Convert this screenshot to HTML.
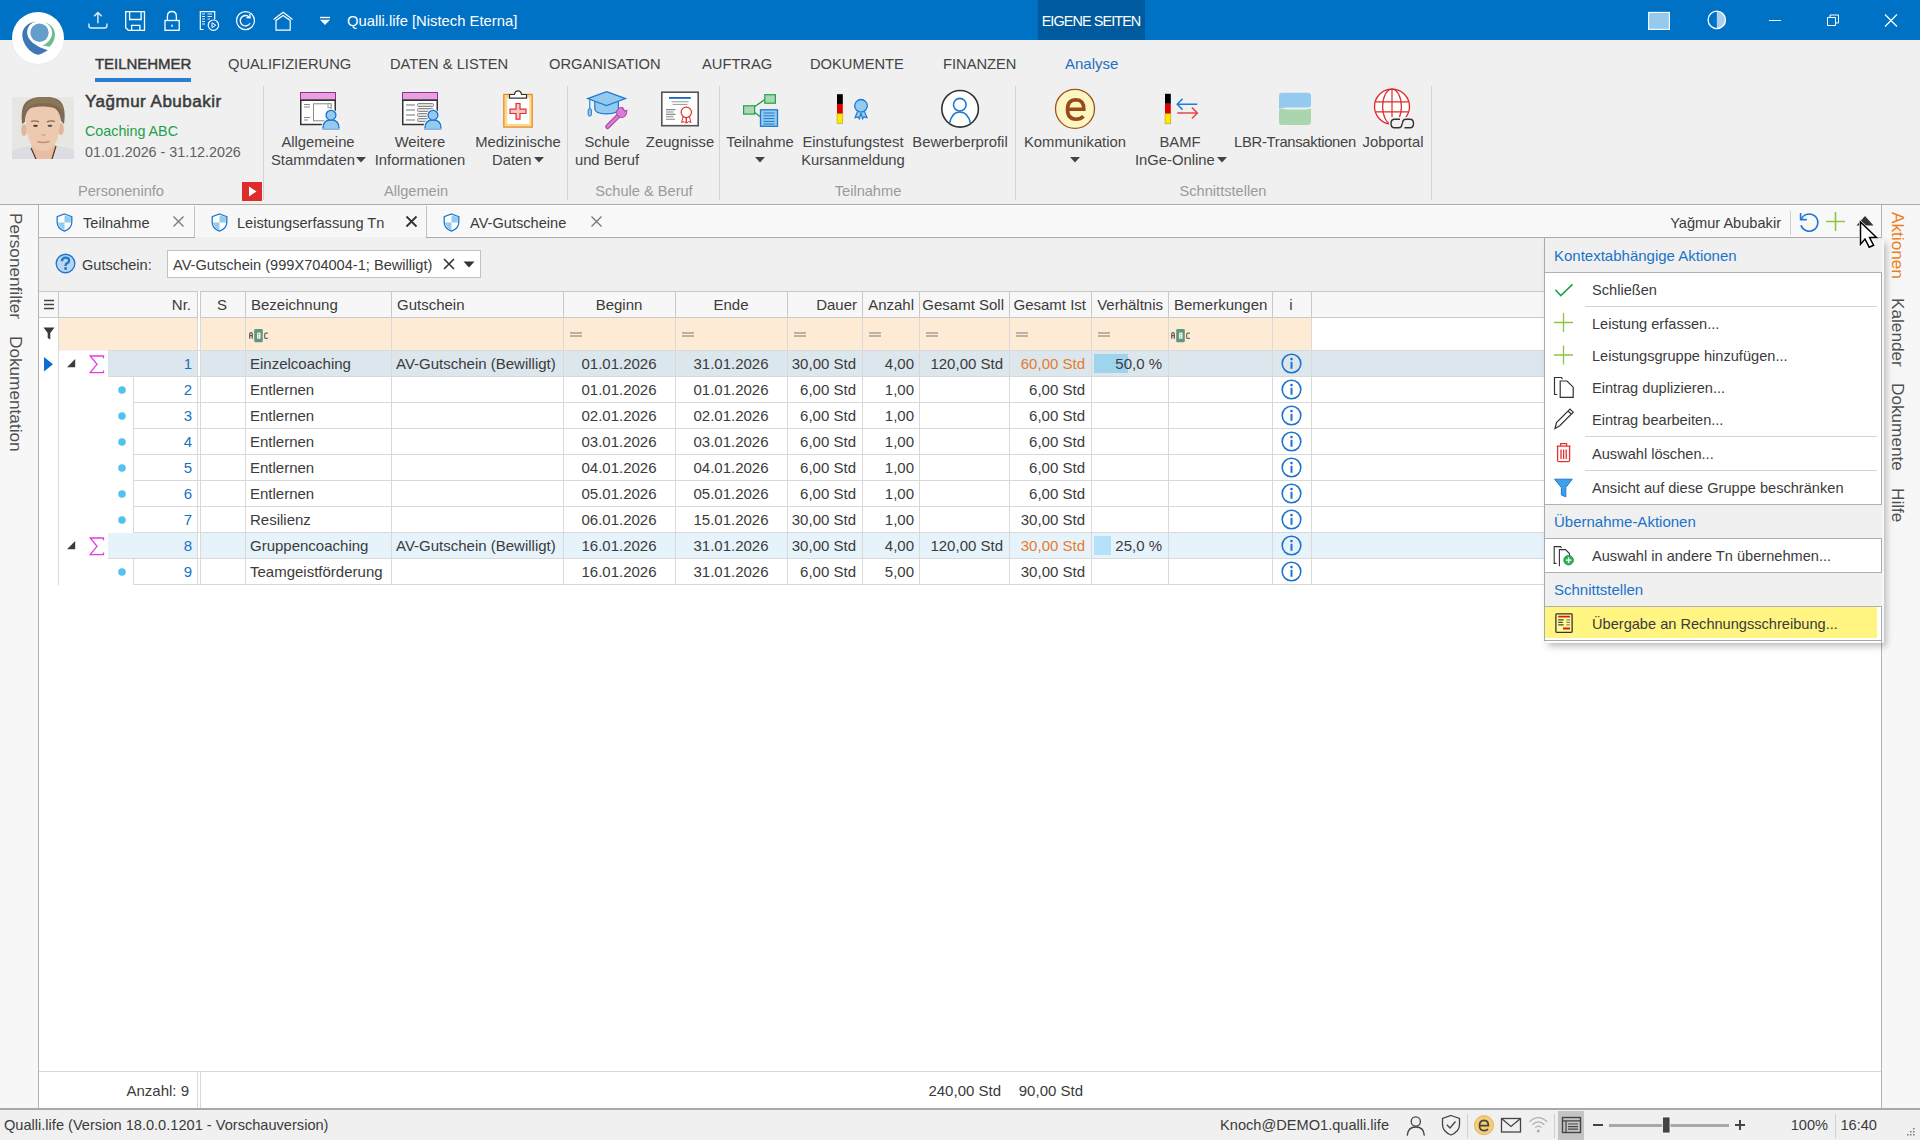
<!DOCTYPE html><html><head><meta charset="utf-8"><title>Qualli.life</title><style>
html,body{margin:0;padding:0;}
body{width:1920px;height:1140px;position:relative;overflow:hidden;background:#fff;font-family:"Liberation Sans", sans-serif;}
.t{position:absolute;white-space:nowrap;line-height:20px;-webkit-font-smoothing:antialiased;}
body{-webkit-font-smoothing:antialiased;}
.r{position:absolute;display:block;}
</style></head><body><div class="r" style="left:0px;top:0px;width:1920px;height:40px;background:#0072c6;"></div>
<div class="r" style="left:1038px;top:0px;width:107px;height:40px;background:#005a9e;"></div>
<div class="r" style="left:0px;top:40px;width:1920px;height:164px;background:#f0f0f0;"></div>
<div class="r" style="left:0px;top:204px;width:1920px;height:1px;background:#aaaaaa;"></div>
<div class="r" style="left:0px;top:205px;width:38px;height:903px;background:#f7f7f7;"></div>
<div class="r" style="left:38px;top:205px;width:1px;height:903px;background:#b4b4b4;"></div>
<div class="r" style="left:1882px;top:205px;width:38px;height:903px;background:#f7f7f7;"></div>
<div class="r" style="left:1881px;top:205px;width:1px;height:903px;background:#b4b4b4;"></div>
<div class="r" style="left:39px;top:205px;width:1842px;height:32px;background:#f8f8f8;"></div>
<div class="r" style="left:39px;top:205px;width:1842px;height:1px;background:#ffffff;"></div>
<div class="r" style="left:39px;top:236px;width:1842px;height:1px;background:#fdfdfd;"></div>
<div class="r" style="left:39px;top:237px;width:1842px;height:1px;background:#aaaaaa;"></div>
<div class="r" style="left:39px;top:238px;width:1842px;height:53px;background:#f0f0f0;"></div>
<div class="r" style="left:39px;top:291px;width:1842px;height:817px;background:#ffffff;"></div>
<div class="r" style="left:0px;top:1108px;width:1920px;height:2px;background:#a9a9a9;"></div>
<div class="r" style="left:0px;top:1110px;width:1920px;height:30px;background:#f0f0f0;"></div>
<div class="r" style="left:39px;top:291px;width:1842px;height:26px;background:#f7f7f7;"></div>
<div class="r" style="left:39px;top:291px;width:1842px;height:1px;background:#c9c9c9;"></div>
<div class="r" style="left:39px;top:317px;width:1842px;height:1px;background:#c9c9c9;"></div>
<div class="r" style="left:59px;top:318px;width:1252px;height:32px;background:#feebd6;"></div>
<div class="r" style="left:58px;top:291px;width:1px;height:26px;background:#c9c9c9;"></div>
<div class="r" style="left:197px;top:291px;width:1px;height:26px;background:#c9c9c9;"></div>
<div class="r" style="left:245px;top:291px;width:1px;height:26px;background:#c9c9c9;"></div>
<div class="r" style="left:391px;top:291px;width:1px;height:26px;background:#c9c9c9;"></div>
<div class="r" style="left:563px;top:291px;width:1px;height:26px;background:#c9c9c9;"></div>
<div class="r" style="left:675px;top:291px;width:1px;height:26px;background:#c9c9c9;"></div>
<div class="r" style="left:787px;top:291px;width:1px;height:26px;background:#c9c9c9;"></div>
<div class="r" style="left:862px;top:291px;width:1px;height:26px;background:#c9c9c9;"></div>
<div class="r" style="left:919px;top:291px;width:1px;height:26px;background:#c9c9c9;"></div>
<div class="r" style="left:1009px;top:291px;width:1px;height:26px;background:#c9c9c9;"></div>
<div class="r" style="left:1091px;top:291px;width:1px;height:26px;background:#c9c9c9;"></div>
<div class="r" style="left:1168px;top:291px;width:1px;height:26px;background:#c9c9c9;"></div>
<div class="r" style="left:1272px;top:291px;width:1px;height:26px;background:#c9c9c9;"></div>
<div class="r" style="left:1311px;top:291px;width:1px;height:26px;background:#c9c9c9;"></div>
<div class="r" style="left:200px;top:291px;width:1px;height:26px;background:#c9c9c9;"></div>
<div class="r" style="left:198px;top:291px;width:2px;height:294px;background:#ffffff;"></div>
<div class="r" style="left:58px;top:318px;width:1px;height:267px;background:#d9d9d9;"></div>
<div class="r" style="left:197px;top:318px;width:1px;height:267px;background:#d9d9d9;"></div>
<div class="r" style="left:245px;top:318px;width:1px;height:267px;background:#d9d9d9;"></div>
<div class="r" style="left:391px;top:318px;width:1px;height:267px;background:#d9d9d9;"></div>
<div class="r" style="left:563px;top:318px;width:1px;height:267px;background:#d9d9d9;"></div>
<div class="r" style="left:675px;top:318px;width:1px;height:267px;background:#d9d9d9;"></div>
<div class="r" style="left:787px;top:318px;width:1px;height:267px;background:#d9d9d9;"></div>
<div class="r" style="left:862px;top:318px;width:1px;height:267px;background:#d9d9d9;"></div>
<div class="r" style="left:919px;top:318px;width:1px;height:267px;background:#d9d9d9;"></div>
<div class="r" style="left:1009px;top:318px;width:1px;height:267px;background:#d9d9d9;"></div>
<div class="r" style="left:1091px;top:318px;width:1px;height:267px;background:#d9d9d9;"></div>
<div class="r" style="left:1168px;top:318px;width:1px;height:267px;background:#d9d9d9;"></div>
<div class="r" style="left:1272px;top:318px;width:1px;height:267px;background:#d9d9d9;"></div>
<div class="r" style="left:1311px;top:318px;width:1px;height:267px;background:#d9d9d9;"></div>
<div class="r" style="left:200px;top:318px;width:1px;height:267px;background:#d9d9d9;"></div>
<div class="r" style="left:59px;top:350px;width:49px;height:1px;background:#f4f4f4;"></div>
<div class="r" style="left:108px;top:350px;width:1773px;height:1px;background:#dadada;"></div>
<div class="r" style="left:108px;top:351px;width:1773px;height:25px;background:#dce6ed;"></div>
<div class="r" style="left:197px;top:351px;width:1px;height:25px;background:#d9d9d9;"></div>
<div class="r" style="left:245px;top:351px;width:1px;height:25px;background:#d9d9d9;"></div>
<div class="r" style="left:391px;top:351px;width:1px;height:25px;background:#d9d9d9;"></div>
<div class="r" style="left:563px;top:351px;width:1px;height:25px;background:#d9d9d9;"></div>
<div class="r" style="left:675px;top:351px;width:1px;height:25px;background:#d9d9d9;"></div>
<div class="r" style="left:787px;top:351px;width:1px;height:25px;background:#d9d9d9;"></div>
<div class="r" style="left:862px;top:351px;width:1px;height:25px;background:#d9d9d9;"></div>
<div class="r" style="left:919px;top:351px;width:1px;height:25px;background:#d9d9d9;"></div>
<div class="r" style="left:1009px;top:351px;width:1px;height:25px;background:#d9d9d9;"></div>
<div class="r" style="left:1091px;top:351px;width:1px;height:25px;background:#d9d9d9;"></div>
<div class="r" style="left:1168px;top:351px;width:1px;height:25px;background:#d9d9d9;"></div>
<div class="r" style="left:1272px;top:351px;width:1px;height:25px;background:#d9d9d9;"></div>
<div class="r" style="left:1311px;top:351px;width:1px;height:25px;background:#d9d9d9;"></div>
<div class="r" style="left:200px;top:351px;width:1px;height:25px;background:#d9d9d9;"></div>
<div class="r" style="left:198px;top:351px;width:2px;height:25px;background:#ffffff;"></div>
<div class="r" style="left:108px;top:376px;width:1773px;height:1px;background:#d9d9d9;"></div>
<div class="t" style="right:1728px;top:353.80px;font-size:15px;color:#1a6fc4;font-weight:normal;">1</div>
<div class="t" style="left:250px;top:353.80px;font-size:15px;color:#3b3b3b;font-weight:normal;">Einzelcoaching</div>
<div class="t" style="left:396px;top:353.80px;font-size:15px;color:#3b3b3b;font-weight:normal;">AV-Gutschein (Bewilligt)</div>
<div class="t" style="left:319px;width:600px;text-align:center;top:353.80px;font-size:15px;color:#3b3b3b;font-weight:normal;">01.01.2026</div>
<div class="t" style="left:431px;width:600px;text-align:center;top:353.80px;font-size:15px;color:#3b3b3b;font-weight:normal;">31.01.2026</div>
<div class="t" style="right:1064px;top:353.80px;font-size:15px;color:#3b3b3b;font-weight:normal;">30,00 Std</div>
<div class="t" style="right:1006px;top:353.80px;font-size:15px;color:#3b3b3b;font-weight:normal;">4,00</div>
<div class="t" style="right:917px;top:353.80px;font-size:15px;color:#3b3b3b;font-weight:normal;">120,00 Std</div>
<div class="t" style="right:835px;top:353.80px;font-size:15px;color:#e87a2c;font-weight:normal;">60,00 Std</div>
<div class="r" style="left:1094px;top:354px;width:34px;height:19px;background:#9fd4ef;"></div>
<div class="t" style="right:758px;top:353.80px;font-size:15px;color:#3b3b3b;font-weight:normal;">50,0 %</div>
<div class="r" style="left:133px;top:402px;width:1748px;height:1px;background:#d9d9d9;"></div>
<div class="r" style="left:133px;top:377px;width:1px;height:25px;background:#d9d9d9;"></div>
<div class="t" style="right:1728px;top:379.80px;font-size:15px;color:#1a6fc4;font-weight:normal;">2</div>
<div class="t" style="left:250px;top:379.80px;font-size:15px;color:#3b3b3b;font-weight:normal;">Entlernen</div>
<div class="t" style="left:319px;width:600px;text-align:center;top:379.80px;font-size:15px;color:#3b3b3b;font-weight:normal;">01.01.2026</div>
<div class="t" style="left:431px;width:600px;text-align:center;top:379.80px;font-size:15px;color:#3b3b3b;font-weight:normal;">01.01.2026</div>
<div class="t" style="right:1064px;top:379.80px;font-size:15px;color:#3b3b3b;font-weight:normal;">6,00 Std</div>
<div class="t" style="right:1006px;top:379.80px;font-size:15px;color:#3b3b3b;font-weight:normal;">1,00</div>
<div class="t" style="right:835px;top:379.80px;font-size:15px;color:#3b3b3b;font-weight:normal;">6,00 Std</div>
<div class="r" style="left:133px;top:428px;width:1748px;height:1px;background:#d9d9d9;"></div>
<div class="r" style="left:133px;top:403px;width:1px;height:25px;background:#d9d9d9;"></div>
<div class="t" style="right:1728px;top:405.80px;font-size:15px;color:#1a6fc4;font-weight:normal;">3</div>
<div class="t" style="left:250px;top:405.80px;font-size:15px;color:#3b3b3b;font-weight:normal;">Entlernen</div>
<div class="t" style="left:319px;width:600px;text-align:center;top:405.80px;font-size:15px;color:#3b3b3b;font-weight:normal;">02.01.2026</div>
<div class="t" style="left:431px;width:600px;text-align:center;top:405.80px;font-size:15px;color:#3b3b3b;font-weight:normal;">02.01.2026</div>
<div class="t" style="right:1064px;top:405.80px;font-size:15px;color:#3b3b3b;font-weight:normal;">6,00 Std</div>
<div class="t" style="right:1006px;top:405.80px;font-size:15px;color:#3b3b3b;font-weight:normal;">1,00</div>
<div class="t" style="right:835px;top:405.80px;font-size:15px;color:#3b3b3b;font-weight:normal;">6,00 Std</div>
<div class="r" style="left:133px;top:454px;width:1748px;height:1px;background:#d9d9d9;"></div>
<div class="r" style="left:133px;top:429px;width:1px;height:25px;background:#d9d9d9;"></div>
<div class="t" style="right:1728px;top:431.80px;font-size:15px;color:#1a6fc4;font-weight:normal;">4</div>
<div class="t" style="left:250px;top:431.80px;font-size:15px;color:#3b3b3b;font-weight:normal;">Entlernen</div>
<div class="t" style="left:319px;width:600px;text-align:center;top:431.80px;font-size:15px;color:#3b3b3b;font-weight:normal;">03.01.2026</div>
<div class="t" style="left:431px;width:600px;text-align:center;top:431.80px;font-size:15px;color:#3b3b3b;font-weight:normal;">03.01.2026</div>
<div class="t" style="right:1064px;top:431.80px;font-size:15px;color:#3b3b3b;font-weight:normal;">6,00 Std</div>
<div class="t" style="right:1006px;top:431.80px;font-size:15px;color:#3b3b3b;font-weight:normal;">1,00</div>
<div class="t" style="right:835px;top:431.80px;font-size:15px;color:#3b3b3b;font-weight:normal;">6,00 Std</div>
<div class="r" style="left:133px;top:480px;width:1748px;height:1px;background:#d9d9d9;"></div>
<div class="r" style="left:133px;top:455px;width:1px;height:25px;background:#d9d9d9;"></div>
<div class="t" style="right:1728px;top:457.80px;font-size:15px;color:#1a6fc4;font-weight:normal;">5</div>
<div class="t" style="left:250px;top:457.80px;font-size:15px;color:#3b3b3b;font-weight:normal;">Entlernen</div>
<div class="t" style="left:319px;width:600px;text-align:center;top:457.80px;font-size:15px;color:#3b3b3b;font-weight:normal;">04.01.2026</div>
<div class="t" style="left:431px;width:600px;text-align:center;top:457.80px;font-size:15px;color:#3b3b3b;font-weight:normal;">04.01.2026</div>
<div class="t" style="right:1064px;top:457.80px;font-size:15px;color:#3b3b3b;font-weight:normal;">6,00 Std</div>
<div class="t" style="right:1006px;top:457.80px;font-size:15px;color:#3b3b3b;font-weight:normal;">1,00</div>
<div class="t" style="right:835px;top:457.80px;font-size:15px;color:#3b3b3b;font-weight:normal;">6,00 Std</div>
<div class="r" style="left:133px;top:506px;width:1748px;height:1px;background:#d9d9d9;"></div>
<div class="r" style="left:133px;top:481px;width:1px;height:25px;background:#d9d9d9;"></div>
<div class="t" style="right:1728px;top:483.80px;font-size:15px;color:#1a6fc4;font-weight:normal;">6</div>
<div class="t" style="left:250px;top:483.80px;font-size:15px;color:#3b3b3b;font-weight:normal;">Entlernen</div>
<div class="t" style="left:319px;width:600px;text-align:center;top:483.80px;font-size:15px;color:#3b3b3b;font-weight:normal;">05.01.2026</div>
<div class="t" style="left:431px;width:600px;text-align:center;top:483.80px;font-size:15px;color:#3b3b3b;font-weight:normal;">05.01.2026</div>
<div class="t" style="right:1064px;top:483.80px;font-size:15px;color:#3b3b3b;font-weight:normal;">6,00 Std</div>
<div class="t" style="right:1006px;top:483.80px;font-size:15px;color:#3b3b3b;font-weight:normal;">1,00</div>
<div class="t" style="right:835px;top:483.80px;font-size:15px;color:#3b3b3b;font-weight:normal;">6,00 Std</div>
<div class="r" style="left:133px;top:532px;width:1748px;height:1px;background:#d9d9d9;"></div>
<div class="r" style="left:133px;top:507px;width:1px;height:25px;background:#d9d9d9;"></div>
<div class="t" style="right:1728px;top:509.80px;font-size:15px;color:#1a6fc4;font-weight:normal;">7</div>
<div class="t" style="left:250px;top:509.80px;font-size:15px;color:#3b3b3b;font-weight:normal;">Resilienz</div>
<div class="t" style="left:319px;width:600px;text-align:center;top:509.80px;font-size:15px;color:#3b3b3b;font-weight:normal;">06.01.2026</div>
<div class="t" style="left:431px;width:600px;text-align:center;top:509.80px;font-size:15px;color:#3b3b3b;font-weight:normal;">15.01.2026</div>
<div class="t" style="right:1064px;top:509.80px;font-size:15px;color:#3b3b3b;font-weight:normal;">30,00 Std</div>
<div class="t" style="right:1006px;top:509.80px;font-size:15px;color:#3b3b3b;font-weight:normal;">1,00</div>
<div class="t" style="right:835px;top:509.80px;font-size:15px;color:#3b3b3b;font-weight:normal;">30,00 Std</div>
<div class="r" style="left:108px;top:533px;width:1773px;height:25px;background:#e6f3fb;"></div>
<div class="r" style="left:197px;top:533px;width:1px;height:25px;background:#d9d9d9;"></div>
<div class="r" style="left:245px;top:533px;width:1px;height:25px;background:#d9d9d9;"></div>
<div class="r" style="left:391px;top:533px;width:1px;height:25px;background:#d9d9d9;"></div>
<div class="r" style="left:563px;top:533px;width:1px;height:25px;background:#d9d9d9;"></div>
<div class="r" style="left:675px;top:533px;width:1px;height:25px;background:#d9d9d9;"></div>
<div class="r" style="left:787px;top:533px;width:1px;height:25px;background:#d9d9d9;"></div>
<div class="r" style="left:862px;top:533px;width:1px;height:25px;background:#d9d9d9;"></div>
<div class="r" style="left:919px;top:533px;width:1px;height:25px;background:#d9d9d9;"></div>
<div class="r" style="left:1009px;top:533px;width:1px;height:25px;background:#d9d9d9;"></div>
<div class="r" style="left:1091px;top:533px;width:1px;height:25px;background:#d9d9d9;"></div>
<div class="r" style="left:1168px;top:533px;width:1px;height:25px;background:#d9d9d9;"></div>
<div class="r" style="left:1272px;top:533px;width:1px;height:25px;background:#d9d9d9;"></div>
<div class="r" style="left:1311px;top:533px;width:1px;height:25px;background:#d9d9d9;"></div>
<div class="r" style="left:200px;top:533px;width:1px;height:25px;background:#d9d9d9;"></div>
<div class="r" style="left:198px;top:533px;width:2px;height:25px;background:#ffffff;"></div>
<div class="r" style="left:108px;top:558px;width:1773px;height:1px;background:#d9d9d9;"></div>
<div class="t" style="right:1728px;top:535.80px;font-size:15px;color:#1a6fc4;font-weight:normal;">8</div>
<div class="t" style="left:250px;top:535.80px;font-size:15px;color:#3b3b3b;font-weight:normal;">Gruppencoaching</div>
<div class="t" style="left:396px;top:535.80px;font-size:15px;color:#3b3b3b;font-weight:normal;">AV-Gutschein (Bewilligt)</div>
<div class="t" style="left:319px;width:600px;text-align:center;top:535.80px;font-size:15px;color:#3b3b3b;font-weight:normal;">16.01.2026</div>
<div class="t" style="left:431px;width:600px;text-align:center;top:535.80px;font-size:15px;color:#3b3b3b;font-weight:normal;">31.01.2026</div>
<div class="t" style="right:1064px;top:535.80px;font-size:15px;color:#3b3b3b;font-weight:normal;">30,00 Std</div>
<div class="t" style="right:1006px;top:535.80px;font-size:15px;color:#3b3b3b;font-weight:normal;">4,00</div>
<div class="t" style="right:917px;top:535.80px;font-size:15px;color:#3b3b3b;font-weight:normal;">120,00 Std</div>
<div class="t" style="right:835px;top:535.80px;font-size:15px;color:#e87a2c;font-weight:normal;">30,00 Std</div>
<div class="r" style="left:1094px;top:536px;width:17px;height:19px;background:#b5e2f8;"></div>
<div class="t" style="right:758px;top:535.80px;font-size:15px;color:#3b3b3b;font-weight:normal;">25,0 %</div>
<div class="r" style="left:133px;top:584px;width:1748px;height:1px;background:#d9d9d9;"></div>
<div class="r" style="left:133px;top:559px;width:1px;height:25px;background:#d9d9d9;"></div>
<div class="t" style="right:1728px;top:561.80px;font-size:15px;color:#1a6fc4;font-weight:normal;">9</div>
<div class="t" style="left:250px;top:561.80px;font-size:15px;color:#3b3b3b;font-weight:normal;">Teamgeistförderung</div>
<div class="t" style="left:319px;width:600px;text-align:center;top:561.80px;font-size:15px;color:#3b3b3b;font-weight:normal;">16.01.2026</div>
<div class="t" style="left:431px;width:600px;text-align:center;top:561.80px;font-size:15px;color:#3b3b3b;font-weight:normal;">31.01.2026</div>
<div class="t" style="right:1064px;top:561.80px;font-size:15px;color:#3b3b3b;font-weight:normal;">6,00 Std</div>
<div class="t" style="right:1006px;top:561.80px;font-size:15px;color:#3b3b3b;font-weight:normal;">5,00</div>
<div class="t" style="right:835px;top:561.80px;font-size:15px;color:#3b3b3b;font-weight:normal;">30,00 Std</div>
<div class="t" style="right:1729px;top:294.80px;font-size:15px;color:#3b3b3b;font-weight:normal;">Nr.</div>
<div class="t" style="left:-78px;width:600px;text-align:center;top:294.80px;font-size:15px;color:#3b3b3b;font-weight:normal;">S</div>
<div class="t" style="left:251px;top:294.80px;font-size:15px;color:#3b3b3b;font-weight:normal;">Bezeichnung</div>
<div class="t" style="left:397px;top:294.80px;font-size:15px;color:#3b3b3b;font-weight:normal;">Gutschein</div>
<div class="t" style="left:319px;width:600px;text-align:center;top:294.80px;font-size:15px;color:#3b3b3b;font-weight:normal;">Beginn</div>
<div class="t" style="left:431px;width:600px;text-align:center;top:294.80px;font-size:15px;color:#3b3b3b;font-weight:normal;">Ende</div>
<div class="t" style="right:1063px;top:294.80px;font-size:15px;color:#3b3b3b;font-weight:normal;">Dauer</div>
<div class="t" style="right:1006px;top:294.80px;font-size:15px;color:#3b3b3b;font-weight:normal;">Anzahl</div>
<div class="t" style="right:916px;top:294.80px;font-size:15px;color:#3b3b3b;font-weight:normal;">Gesamt Soll</div>
<div class="t" style="right:834px;top:294.80px;font-size:15px;color:#3b3b3b;font-weight:normal;">Gesamt Ist</div>
<div class="t" style="right:757px;top:294.80px;font-size:15px;color:#3b3b3b;font-weight:normal;">Verhältnis</div>
<div class="t" style="left:1174px;top:294.80px;font-size:15px;color:#3b3b3b;font-weight:normal;">Bemerkungen</div>
<div class="t" style="left:991px;width:600px;text-align:center;top:294.80px;font-size:15px;color:#3b3b3b;font-weight:normal;">i</div>
<svg class="r" style="left:43px;top:299px" width="12" height="11" viewBox="0 0 12 11"><path d="M1 1.5H11M1 5.5H11M1 9.5H11" stroke="#444" stroke-width="1.4"/></svg>
<svg class="r" style="left:43px;top:327px" width="12" height="14" viewBox="0 0 12 14"><path d="M0.5 0.5H11.5L7.3 6V12.5L4.7 11V6Z" fill="#3a3a3a"/></svg>
<svg class="r" style="left:44px;top:357px" width="10" height="15" viewBox="0 0 10 15"><path d="M0 0L9 7.3L0 14.6Z" fill="#0b6ed0"/></svg>
<svg class="r" style="left:246px;top:326px" width="24" height="19" viewBox="246 326 24 19"><g transform="translate(0,0)"><path d="M249.7 338.8V334.2Q249.7 332.7 251 332.7Q252.3 332.7 252.3 334.2V338.8M249.7 335.6H252.3" fill="none" stroke="#5a5a5a" stroke-width="1.2"/><rect x="254.2" y="329.1" width="8.6" height="13.1" rx="1.3" fill="#62977f"/><rect x="257" y="332.6" width="3.6" height="6.2" rx="0.9" fill="#efeedc"/><circle cx="258.6" cy="334.5" r="0.6" fill="#62977f"/><path d="M258.2 336.5H259.2L258.7 338Z" fill="#62977f"/><path d="M267.9 333.2H265.6Q264.7 333.2 264.7 334.2V337.4Q264.7 338.4 265.6 338.4H267.9" fill="none" stroke="#6a6a6a" stroke-width="1.2"/></g></svg>
<svg class="r" style="left:1168px;top:326px" width="24" height="19" viewBox="1168 326 24 19"><g transform="translate(922,0)"><path d="M249.7 338.8V334.2Q249.7 332.7 251 332.7Q252.3 332.7 252.3 334.2V338.8M249.7 335.6H252.3" fill="none" stroke="#5a5a5a" stroke-width="1.2"/><rect x="254.2" y="329.1" width="8.6" height="13.1" rx="1.3" fill="#62977f"/><rect x="257" y="332.6" width="3.6" height="6.2" rx="0.9" fill="#efeedc"/><circle cx="258.6" cy="334.5" r="0.6" fill="#62977f"/><path d="M258.2 336.5H259.2L258.7 338Z" fill="#62977f"/><path d="M267.9 333.2H265.6Q264.7 333.2 264.7 334.2V337.4Q264.7 338.4 265.6 338.4H267.9" fill="none" stroke="#6a6a6a" stroke-width="1.2"/></g></svg>
<svg class="r" style="left:570px;top:332px" width="12" height="5" viewBox="0 0 12 5"><path d="M0 1H12M0 4H12" stroke="#7a7a7a" stroke-width="1.2"/></svg>
<svg class="r" style="left:682px;top:332px" width="12" height="5" viewBox="0 0 12 5"><path d="M0 1H12M0 4H12" stroke="#7a7a7a" stroke-width="1.2"/></svg>
<svg class="r" style="left:794px;top:332px" width="12" height="5" viewBox="0 0 12 5"><path d="M0 1H12M0 4H12" stroke="#7a7a7a" stroke-width="1.2"/></svg>
<svg class="r" style="left:869px;top:332px" width="12" height="5" viewBox="0 0 12 5"><path d="M0 1H12M0 4H12" stroke="#7a7a7a" stroke-width="1.2"/></svg>
<svg class="r" style="left:926px;top:332px" width="12" height="5" viewBox="0 0 12 5"><path d="M0 1H12M0 4H12" stroke="#7a7a7a" stroke-width="1.2"/></svg>
<svg class="r" style="left:1016px;top:332px" width="12" height="5" viewBox="0 0 12 5"><path d="M0 1H12M0 4H12" stroke="#7a7a7a" stroke-width="1.2"/></svg>
<svg class="r" style="left:1098px;top:332px" width="12" height="5" viewBox="0 0 12 5"><path d="M0 1H12M0 4H12" stroke="#7a7a7a" stroke-width="1.2"/></svg>
<svg class="r" style="left:67px;top:359px" width="9" height="9" viewBox="0 0 9 9"><path d="M0 8.2L8.2 8.2L8.2 0Z" fill="#3c3c3c"/></svg>
<svg class="r" style="left:89px;top:355px" width="16" height="19" viewBox="0 0 16 19"><path d="M14.5 3.2V1H1.2L8 9.3L1.2 17.6H14.5V15.4" fill="none" stroke="#e03ee0" stroke-width="1.3"/></svg>
<svg class="r" style="left:1281px;top:353px" width="21" height="21" viewBox="0 0 21 21"><circle cx="10.5" cy="10.5" r="9.3" fill="none" stroke="#1f73cf" stroke-width="1.6"/><circle cx="10.5" cy="6.1" r="1.3" fill="#1f73cf"/><path d="M10.5 8.8V15.8" stroke="#1f73cf" stroke-width="2"/></svg>
<svg class="r" style="left:118px;top:386px" width="8" height="8" viewBox="0 0 8 8"><circle cx="4" cy="4" r="3.8" fill="#55c1ee"/></svg>
<svg class="r" style="left:1281px;top:379px" width="21" height="21" viewBox="0 0 21 21"><circle cx="10.5" cy="10.5" r="9.3" fill="none" stroke="#1f73cf" stroke-width="1.6"/><circle cx="10.5" cy="6.1" r="1.3" fill="#1f73cf"/><path d="M10.5 8.8V15.8" stroke="#1f73cf" stroke-width="2"/></svg>
<svg class="r" style="left:118px;top:412px" width="8" height="8" viewBox="0 0 8 8"><circle cx="4" cy="4" r="3.8" fill="#55c1ee"/></svg>
<svg class="r" style="left:1281px;top:405px" width="21" height="21" viewBox="0 0 21 21"><circle cx="10.5" cy="10.5" r="9.3" fill="none" stroke="#1f73cf" stroke-width="1.6"/><circle cx="10.5" cy="6.1" r="1.3" fill="#1f73cf"/><path d="M10.5 8.8V15.8" stroke="#1f73cf" stroke-width="2"/></svg>
<svg class="r" style="left:118px;top:438px" width="8" height="8" viewBox="0 0 8 8"><circle cx="4" cy="4" r="3.8" fill="#55c1ee"/></svg>
<svg class="r" style="left:1281px;top:431px" width="21" height="21" viewBox="0 0 21 21"><circle cx="10.5" cy="10.5" r="9.3" fill="none" stroke="#1f73cf" stroke-width="1.6"/><circle cx="10.5" cy="6.1" r="1.3" fill="#1f73cf"/><path d="M10.5 8.8V15.8" stroke="#1f73cf" stroke-width="2"/></svg>
<svg class="r" style="left:118px;top:464px" width="8" height="8" viewBox="0 0 8 8"><circle cx="4" cy="4" r="3.8" fill="#55c1ee"/></svg>
<svg class="r" style="left:1281px;top:457px" width="21" height="21" viewBox="0 0 21 21"><circle cx="10.5" cy="10.5" r="9.3" fill="none" stroke="#1f73cf" stroke-width="1.6"/><circle cx="10.5" cy="6.1" r="1.3" fill="#1f73cf"/><path d="M10.5 8.8V15.8" stroke="#1f73cf" stroke-width="2"/></svg>
<svg class="r" style="left:118px;top:490px" width="8" height="8" viewBox="0 0 8 8"><circle cx="4" cy="4" r="3.8" fill="#55c1ee"/></svg>
<svg class="r" style="left:1281px;top:483px" width="21" height="21" viewBox="0 0 21 21"><circle cx="10.5" cy="10.5" r="9.3" fill="none" stroke="#1f73cf" stroke-width="1.6"/><circle cx="10.5" cy="6.1" r="1.3" fill="#1f73cf"/><path d="M10.5 8.8V15.8" stroke="#1f73cf" stroke-width="2"/></svg>
<svg class="r" style="left:118px;top:516px" width="8" height="8" viewBox="0 0 8 8"><circle cx="4" cy="4" r="3.8" fill="#55c1ee"/></svg>
<svg class="r" style="left:1281px;top:509px" width="21" height="21" viewBox="0 0 21 21"><circle cx="10.5" cy="10.5" r="9.3" fill="none" stroke="#1f73cf" stroke-width="1.6"/><circle cx="10.5" cy="6.1" r="1.3" fill="#1f73cf"/><path d="M10.5 8.8V15.8" stroke="#1f73cf" stroke-width="2"/></svg>
<svg class="r" style="left:67px;top:541px" width="9" height="9" viewBox="0 0 9 9"><path d="M0 8.2L8.2 8.2L8.2 0Z" fill="#3c3c3c"/></svg>
<svg class="r" style="left:89px;top:537px" width="16" height="19" viewBox="0 0 16 19"><path d="M14.5 3.2V1H1.2L8 9.3L1.2 17.6H14.5V15.4" fill="none" stroke="#e03ee0" stroke-width="1.3"/></svg>
<svg class="r" style="left:1281px;top:535px" width="21" height="21" viewBox="0 0 21 21"><circle cx="10.5" cy="10.5" r="9.3" fill="none" stroke="#1f73cf" stroke-width="1.6"/><circle cx="10.5" cy="6.1" r="1.3" fill="#1f73cf"/><path d="M10.5 8.8V15.8" stroke="#1f73cf" stroke-width="2"/></svg>
<svg class="r" style="left:118px;top:568px" width="8" height="8" viewBox="0 0 8 8"><circle cx="4" cy="4" r="3.8" fill="#55c1ee"/></svg>
<svg class="r" style="left:1281px;top:561px" width="21" height="21" viewBox="0 0 21 21"><circle cx="10.5" cy="10.5" r="9.3" fill="none" stroke="#1f73cf" stroke-width="1.6"/><circle cx="10.5" cy="6.1" r="1.3" fill="#1f73cf"/><path d="M10.5 8.8V15.8" stroke="#1f73cf" stroke-width="2"/></svg>
<div class="r" style="left:39px;top:1071px;width:1842px;height:1px;background:#d9d9d9;"></div>
<div class="r" style="left:197px;top:1072px;width:1px;height:36px;background:#d9d9d9;"></div>
<div class="r" style="left:200px;top:1072px;width:1px;height:36px;background:#d9d9d9;"></div>
<div class="t" style="right:1731px;top:1080.80px;font-size:15px;color:#3b3b3b;font-weight:normal;">Anzahl: 9</div>
<div class="t" style="right:919px;top:1080.80px;font-size:15px;color:#3b3b3b;font-weight:normal;">240,00 Std</div>
<div class="t" style="right:837px;top:1080.80px;font-size:15px;color:#3b3b3b;font-weight:normal;">90,00 Std</div>
<svg class="r" style="left:80px;top:0px" width="260" height="40" viewBox="80 0 260 40"><path d="M97.9 23.3V12.6M94.2 16.2L97.9 12.4L101.7 16.2" fill="none" stroke="#e4eef8" stroke-width="1.4"/><path d="M88.9 23.6V25.8Q88.9 28 91.2 28H104.6Q106.9 28 106.9 25.8V23.6" fill="none" stroke="#e4eef8" stroke-width="1.4"/><path d="M125.7 11.6H144.5V30.3H128.3L125.7 27.7Z" fill="none" stroke="#fff" stroke-width="1.3"/><path d="M129.6 11.6V19.5H141.1V11.6" fill="none" stroke="#fff" stroke-width="1.3"/><path d="M131.6 30.3V25.3H139.9V30.3" fill="none" stroke="#fff" stroke-width="1.3"/><path d="M167.4 20.4V16.4Q167.4 11.5 171.9 11.5Q176.4 11.5 176.4 16.4V20.4" fill="none" stroke="#fff" stroke-width="1.3"/><rect x="165" y="20.5" width="14.2" height="9.8" fill="none" stroke="#fff" stroke-width="1.3"/><rect x="171.3" y="24.6" width="1.3" height="2.4" fill="#fff"/><path d="M203.5 29.5H199.8M200.3 29.5V11.6H214.7V19.5" fill="none" stroke="#fff" stroke-width="1.2"/><path d="M202 14H205M202 16.5H205M202 19H205M202 21.5H205M202 24H205M207.5 14H212M207.5 16.5H212M207.5 19H210" stroke="#dfeaf5" stroke-width="1.1"/><circle cx="213.4" cy="25.2" r="5.2" fill="#0072c6" stroke="#fff" stroke-width="1.2"/><path d="M212 22.8L215.8 25.2L212 27.6Z" fill="none" stroke="#fff" stroke-width="1"/><circle cx="245.5" cy="20.6" r="9" fill="none" stroke="#fff" stroke-width="1.2"/><path d="M249.3 17.2A5.2 5.2 0 1 0 250 23.2" fill="none" stroke="#fff" stroke-width="1.3"/><path d="M246.5 17.6L250.2 17.8L249.8 14" fill="none" stroke="#fff" stroke-width="1.2"/><path d="M273.6 19.4L283.1 12.3L292.6 19.4" fill="none" stroke="#fff" stroke-width="1.2"/><path d="M276 30.1V20.4L283.1 15.4L290.2 20.4V30.1Z" fill="none" stroke="#fff" stroke-width="1.2"/><rect x="320" y="16.8" width="10" height="1.4" fill="#fff"/><path d="M320 19.8H330L325 25Z" fill="#fff"/></svg>
<div class="t" style="left:347px;top:10.87px;font-size:14.8px;color:#ffffff;font-weight:normal;">Qualli.life [Nistech Eterna]</div>
<div class="t" style="left:791px;width:600px;text-align:center;top:11.01px;font-size:14.4px;color:#ffffff;font-weight:normal;letter-spacing:-0.9px;">EIGENE SEITEN</div>
<svg class="r" style="left:1640px;top:0px" width="270" height="40" viewBox="1640 0 270 40"><rect x="1648.6" y="12.4" width="20.8" height="17" fill="#94caee" stroke="#fff" stroke-width="1.1"/><path d="M1716.8 11.2A8.7 8.7 0 0 1 1716.8 28.6Z" fill="#a9d0ee"/><circle cx="1716.8" cy="19.9" r="8.7" fill="none" stroke="#fff" stroke-width="1.3"/><path d="M1769 20.5H1781" stroke="#fff" stroke-width="1"/><path d="M1827.5 17.5H1835.5V25.5H1827.5Z M1830 17.5V15H1838.5V23H1835.5" fill="none" stroke="#fff" stroke-width="1"/><path d="M1885 14.5L1897 26.5M1897 14.5L1885 26.5" stroke="#fff" stroke-width="1.2"/></svg>
<svg class="r" style="left:8px;top:8px" width="62" height="62" viewBox="8 8 62 62"><circle cx="38" cy="38.2" r="26.3" fill="#000" opacity="0.06"/><circle cx="38" cy="38" r="26" fill="#fff"/><circle cx="39.5" cy="32.8" r="9.2" fill="#649fcc"/><path d="M36 21.2C28 22.5 22 28 22.3 35.5C22.6 42 27 49.5 34 53.5C36.5 55 39.5 55 42 53.5L47.8 50.2C42 48.5 38 46.5 34.5 44C29.5 40.5 27 36.5 27.2 31.5C27.5 26.5 31 22.8 36 21.2Z" fill="#3e77b6"/><path d="M44.5 22.2C50.5 24 55 28.5 55 34.5C55 40 52 44.5 49.5 46.8L42.5 45.6C47 43.5 51.2 39.5 52 34.5C52.8 29 49.8 24.8 44.5 22.2Z" fill="#6cbd89"/></svg>
<div class="t" style="left:95px;top:53.80px;font-size:15px;color:#3a3a3a;font-weight:normal;-webkit-text-stroke:0.45px #3a3a3a;letter-spacing:-0.05px;">TEILNEHMER</div>
<div class="r" style="left:95px;top:78px;width:96px;height:4px;background:#2b7cd3;"></div>
<div class="t" style="left:228px;top:53.91px;font-size:14.7px;color:#444444;font-weight:normal;">QUALIFIZIERUNG</div>
<div class="t" style="left:390px;top:53.91px;font-size:14.7px;color:#444444;font-weight:normal;">DATEN &amp; LISTEN</div>
<div class="t" style="left:549px;top:53.91px;font-size:14.7px;color:#444444;font-weight:normal;">ORGANISATION</div>
<div class="t" style="left:702px;top:53.91px;font-size:14.7px;color:#444444;font-weight:normal;">AUFTRAG</div>
<div class="t" style="left:810px;top:53.91px;font-size:14.7px;color:#444444;font-weight:normal;">DOKUMENTE</div>
<div class="t" style="left:943px;top:53.91px;font-size:14.7px;color:#444444;font-weight:normal;">FINANZEN</div>
<div class="t" style="left:1065px;top:53.80px;font-size:15px;color:#1f6fc0;font-weight:normal;">Analyse</div>
<div class="r" style="left:263px;top:86px;width:1px;height:114px;background:#d3d3d3;"></div>
<div class="r" style="left:567px;top:86px;width:1px;height:114px;background:#d3d3d3;"></div>
<div class="r" style="left:719px;top:86px;width:1px;height:114px;background:#d3d3d3;"></div>
<div class="r" style="left:1015px;top:86px;width:1px;height:114px;background:#d3d3d3;"></div>
<div class="r" style="left:1431px;top:86px;width:1px;height:114px;background:#d3d3d3;"></div>
<div class="t" style="left:-179px;width:600px;text-align:center;top:180.94px;font-size:14.6px;color:#9a9a9a;font-weight:normal;">Personeninfo</div>
<div class="t" style="left:116px;width:600px;text-align:center;top:180.94px;font-size:14.6px;color:#9a9a9a;font-weight:normal;">Allgemein</div>
<div class="t" style="left:344px;width:600px;text-align:center;top:180.94px;font-size:14.6px;color:#9a9a9a;font-weight:normal;">Schule &amp; Beruf</div>
<div class="t" style="left:568px;width:600px;text-align:center;top:180.94px;font-size:14.6px;color:#9a9a9a;font-weight:normal;">Teilnahme</div>
<div class="t" style="left:923px;width:600px;text-align:center;top:180.94px;font-size:14.6px;color:#9a9a9a;font-weight:normal;">Schnittstellen</div>
<div class="r" style="left:242px;top:182px;width:20px;height:19px;background:#e02b2b;"></div>
<svg class="r" style="left:242px;top:182px" width="20" height="19" viewBox="0 0 20 19"><path d="M7 4.5L14.5 9.5L7 14.5Z" fill="#fff"/></svg>
<div class="t" style="left:85px;top:92.11px;font-size:17px;color:#3c3c3c;font-weight:normal;-webkit-text-stroke:0.55px #3c3c3c;letter-spacing:0.5px;">Yağmur Abubakir</div>
<div class="t" style="left:85px;top:121.05px;font-size:14.3px;color:#21a04a;font-weight:normal;">Coaching ABC</div>
<div class="t" style="left:85px;top:142.05px;font-size:14.3px;color:#606060;font-weight:normal;">01.01.2026 - 31.12.2026</div>
<svg class="r" style="left:12px;top:97px" width="62" height="62" viewBox="12 97 62 62"><defs><filter id="bl" x="-10%" y="-10%" width="120%" height="120%"><feGaussianBlur stdDeviation="0.7"/></filter></defs><rect x="12" y="97" width="62" height="62" fill="#e6e6e2"/><g filter="url(#bl)"><path d="M12 159V151C16 148 24 147 30 146L56 146C62 147 70 148 74 151V159Z" fill="#dcdce2"/><path d="M31 140L32 151L36 159H52L55 150L55 140Z" fill="#e6bea4"/><path d="M31 148L36 159M56 146L52 159" stroke="#5a3020" stroke-width="1.2"/><ellipse cx="24" cy="130" rx="2.8" ry="6" fill="#e0b598"/><ellipse cx="61" cy="129" rx="2.8" ry="6" fill="#e0b598"/><path d="M26 118C26 106 32 103 43 103C54 103 60 106 60 118C60 136 56 151 43 151C30 151 26 136 26 118Z" fill="#edc9b0"/><path d="M22 124C21 111 22 102 31 99C38 96 50 96 57 99C64 102 66 112 64 124L61 121C60 114 58 110 54 108C47 106 37 106 31 108C27 110 25 115 25 122Z" fill="#7d6a52"/><path d="M24 112C27 100 36 97 44 97C54 97 62 101 64 112C60 106 52 103 44 103C34 103 28 106 24 112Z" fill="#8c7659"/><path d="M31 121.5Q35 120.2 39 121.8M47 121.8Q51 120.2 55 121.5" fill="none" stroke="#8a6a50" stroke-width="1.3"/><ellipse cx="35.5" cy="125.8" rx="2.4" ry="1.1" fill="#3f3a36"/><ellipse cx="50" cy="125.8" rx="2.4" ry="1.1" fill="#4a5050"/><path d="M41.5 134.5Q43.5 136.5 45.5 134.5" fill="none" stroke="#c89078" stroke-width="1"/><path d="M37.5 141.5Q43.5 143.5 49.5 141.5" fill="none" stroke="#c98a80" stroke-width="1.5"/></g></svg>
<div class="t" style="left:18px;width:600px;text-align:center;top:131.87px;font-size:14.8px;color:#444444;font-weight:normal;">Allgemeine</div>
<div class="t" style="left:271px;top:149.87px;font-size:14.8px;color:#444444;font-weight:normal;">Stammdaten</div>
<svg class="r" style="left:356px;top:157px" width="10" height="6" viewBox="0 0 10 6"><path d="M0 0H10L5 5.5Z" fill="#444"/></svg>
<div class="t" style="left:120px;width:600px;text-align:center;top:131.87px;font-size:14.8px;color:#444444;font-weight:normal;">Weitere</div>
<div class="t" style="left:120px;width:600px;text-align:center;top:149.87px;font-size:14.8px;color:#444444;font-weight:normal;">Informationen</div>
<div class="t" style="left:218px;width:600px;text-align:center;top:131.87px;font-size:14.8px;color:#444444;font-weight:normal;">Medizinische</div>
<div class="t" style="left:492px;top:149.87px;font-size:14.8px;color:#444444;font-weight:normal;">Daten</div>
<svg class="r" style="left:534px;top:157px" width="10" height="6" viewBox="0 0 10 6"><path d="M0 0H10L5 5.5Z" fill="#444"/></svg>
<div class="t" style="left:307px;width:600px;text-align:center;top:131.87px;font-size:14.8px;color:#444444;font-weight:normal;">Schule</div>
<div class="t" style="left:307px;width:600px;text-align:center;top:149.87px;font-size:14.8px;color:#444444;font-weight:normal;">und Beruf</div>
<div class="t" style="left:380px;width:600px;text-align:center;top:131.87px;font-size:14.8px;color:#444444;font-weight:normal;">Zeugnisse</div>
<div class="t" style="left:460px;width:600px;text-align:center;top:131.87px;font-size:14.8px;color:#444444;font-weight:normal;">Teilnahme</div>
<svg class="r" style="left:755px;top:157px" width="10" height="6" viewBox="0 0 10 6"><path d="M0 0H10L5 5.5Z" fill="#444"/></svg>
<div class="t" style="left:553px;width:600px;text-align:center;top:131.87px;font-size:14.8px;color:#444444;font-weight:normal;">Einstufungstest</div>
<div class="t" style="left:553px;width:600px;text-align:center;top:149.87px;font-size:14.8px;color:#444444;font-weight:normal;">Kursanmeldung</div>
<div class="t" style="left:660px;width:600px;text-align:center;top:131.87px;font-size:14.8px;color:#444444;font-weight:normal;">Bewerberprofil</div>
<div class="t" style="left:775px;width:600px;text-align:center;top:131.87px;font-size:14.8px;color:#444444;font-weight:normal;">Kommunikation</div>
<svg class="r" style="left:1070px;top:157px" width="10" height="6" viewBox="0 0 10 6"><path d="M0 0H10L5 5.5Z" fill="#444"/></svg>
<div class="t" style="left:880px;width:600px;text-align:center;top:131.87px;font-size:14.8px;color:#444444;font-weight:normal;">BAMF</div>
<div class="t" style="left:1135px;top:149.87px;font-size:14.8px;color:#444444;font-weight:normal;">InGe-Online</div>
<svg class="r" style="left:1217px;top:157px" width="10" height="6" viewBox="0 0 10 6"><path d="M0 0H10L5 5.5Z" fill="#444"/></svg>
<div class="t" style="left:995px;width:600px;text-align:center;top:131.87px;font-size:14.8px;color:#444444;font-weight:normal;letter-spacing:-0.3px;">LBR-Transaktionen</div>
<div class="t" style="left:1093px;width:600px;text-align:center;top:131.87px;font-size:14.8px;color:#444444;font-weight:normal;">Jobportal</div>
<svg class="r" style="left:290px;top:86px" width="160" height="50" viewBox="290 86 160 50"><rect x="300.5" y="92.5" width="35" height="7.5" fill="#e4a2de" stroke="#9a2a90" stroke-width="1"/><rect x="300.75" y="100.25" width="34.5" height="24.25" fill="#fff" stroke="#333" stroke-width="1.5"/><path d="M304 104.5H310M304 107H310M304 117.5H310M304 120H308" stroke="#888" stroke-width="1.1"/><rect x="313.5" y="103.8" width="17.5" height="17" fill="#fff" stroke="#888" stroke-width="1"/><rect x="328" y="103.8" width="3" height="4" fill="#fff" stroke="#888" stroke-width="0.8"/><path d="M323 129.2V128Q323 119.8 331 119.8Q339 119.8 339 128V129.2Z" fill="#f0f0f0" stroke="#f4f4f4" stroke-width="3"/><circle cx="331" cy="115.2" r="4.9" fill="#f4f4f4" stroke="#f4f4f4" stroke-width="3"/><path d="M323 129.2V128Q323 119.8 331 119.8Q339 119.8 339 128V129.2Z" fill="#94caee" stroke="#1872cc" stroke-width="1.3"/><path d="M321 129H341" stroke="#f0f0f0" stroke-width="0.8"/><circle cx="331" cy="115.2" r="4.9" fill="#94caee" stroke="#1872cc" stroke-width="1.3"/><rect x="402.5" y="92.5" width="35" height="7.5" fill="#e4a2de" stroke="#9a2a90" stroke-width="1"/><rect x="402.75" y="100.25" width="34.5" height="24.25" fill="#fff" stroke="#333" stroke-width="1.5"/><path d="M406 105H415" stroke="#888" stroke-width="1.2"/><rect x="417.5" y="103.5" width="16" height="3" rx="1" fill="#ddd" stroke="#888" stroke-width="1"/><path d="M406 110H415" stroke="#888" stroke-width="1.2"/><rect x="417.5" y="108.5" width="16" height="3" rx="1" fill="#ddd" stroke="#888" stroke-width="1"/><path d="M406 115H415" stroke="#888" stroke-width="1.2"/><rect x="417.5" y="113.5" width="16" height="3" rx="1" fill="#ddd" stroke="#888" stroke-width="1"/><path d="M406 120H415" stroke="#888" stroke-width="1.2"/><rect x="417.5" y="118.5" width="16" height="3" rx="1" fill="#ddd" stroke="#888" stroke-width="1"/><path d="M425 129.2V128Q425 119.8 433 119.8Q441 119.8 441 128V129.2Z" fill="#f0f0f0" stroke="#f4f4f4" stroke-width="3"/><circle cx="433" cy="115.2" r="4.9" fill="#f4f4f4" stroke="#f4f4f4" stroke-width="3"/><path d="M425 129.2V128Q425 119.8 433 119.8Q441 119.8 441 128V129.2Z" fill="#94caee" stroke="#1872cc" stroke-width="1.3"/><path d="M423 129H443" stroke="#f0f0f0" stroke-width="0.8"/><circle cx="433" cy="115.2" r="4.9" fill="#94caee" stroke="#1872cc" stroke-width="1.3"/></svg>
<svg class="r" style="left:495px;top:86px" width="50" height="50" viewBox="495 86 50 50"><rect x="503.8" y="94.4" width="28.4" height="32.7" fill="#fbd98c" stroke="#e8842a" stroke-width="1.2"/><rect x="507.3" y="98" width="22" height="26" fill="#fff"/><path d="M509.5 98.2V94.5H514.5Q515 90.8 518 90.8Q521 90.8 521.5 94.5H526.5V98.2Z" fill="#fff" stroke="#333" stroke-width="1.2"/><path d="M516 103.5H520V109.2H526V113.5H520V119.2H516V113.5H510V109.2H516Z" fill="#f6c4c4" stroke="#e23030" stroke-width="1.2"/></svg>
<svg class="r" style="left:580px;top:86px" width="55" height="50" viewBox="580 86 55 50"><path d="M594.8 101.5V108.5Q594.8 113.8 606.6 113.8Q618.4 113.8 618.4 108.5V101.5" fill="#94caee" stroke="#1e78d0" stroke-width="1.2"/><path d="M587.6 98.6L606.6 91.6L625.6 98.6L606.6 105.6Z" fill="#94caee" stroke="#1e78d0" stroke-width="1.2"/><path d="M589.8 99.5V109" stroke="#1e78d0" stroke-width="1.1"/><rect x="588.2" y="108.8" width="3.2" height="7.2" rx="1.3" fill="#94caee" stroke="#1e78d0" stroke-width="1"/><path d="M607.6 126.6L618.6 115.6" stroke="#a842a0" stroke-width="4.8" stroke-linecap="round"/><path d="M607.6 126.6L618.6 115.6" stroke="#dc7bd8" stroke-width="2.6" stroke-linecap="round"/><circle cx="621.6" cy="112.5" r="5" fill="#dc7bd8" stroke="#a842a0" stroke-width="1"/><path d="M622.2 105.8L625.2 110.6L628.6 109.2L629 106Z" fill="#f0f0f0"/><path d="M622 107.6L624.6 111.2L627.6 110.2" fill="none" stroke="#a842a0" stroke-width="1"/></svg>
<svg class="r" style="left:655px;top:86px" width="50" height="50" viewBox="655 86 50 50"><rect x="661.8" y="92.2" width="36.4" height="33.5" fill="#fff" stroke="#555" stroke-width="1.6"/><path d="M669 97.9H690.8" stroke="#1565c0" stroke-width="1.8"/><path d="M671.5 101.8H688.5M672.5 104.4H687.5" stroke="#999" stroke-width="1"/><path d="M666 109.6H675.5M666 112H673.5M666 114.4H675.5M666 116.8H673.5M666 119.3H675" stroke="#888" stroke-width="1.1"/><path d="M683.2 116.5L681.5 122.5L684.2 121.5L685.8 123.2L686.8 117.5M689.4 116.5L691 122.5L688.4 121.5L686.8 123.2L685.8 117.5" fill="#fff" stroke="#e03030" stroke-width="1"/><circle cx="686.3" cy="112.3" r="5.2" fill="#fff" stroke="#e03030" stroke-width="1.2"/></svg>
<svg class="r" style="left:738px;top:88px" width="44" height="44" viewBox="738 88 44 44"><path d="M754.8 106.5L764.5 99.8M754.8 112.5L760.5 117" stroke="#22a04e" stroke-width="1.3"/><rect x="743.6" y="105.8" width="11" height="8.3" fill="#a9d8b2" stroke="#22a04e" stroke-width="1.2"/><rect x="764.8" y="94.7" width="10.6" height="8.5" fill="#a9d8b2" stroke="#22a04e" stroke-width="1.2"/><rect x="760.5" y="109.8" width="17" height="16.5" fill="#94caee" stroke="#1e78d0" stroke-width="1.3"/><path d="M763.5 113H774.5M763.5 115.8H774.5M763.5 118.6H774.5M763.5 121.4H774.5M763.5 124H774.5" stroke="#1e78d0" stroke-width="1"/></svg>
<svg class="r" style="left:830px;top:88px" width="50" height="42" viewBox="830 88 50 42"><rect x="837" y="94.2" width="5.8" height="9.799999999999997" fill="#000"/><rect x="837" y="104.0" width="5.8" height="9.799999999999997" fill="#e00000"/><rect x="837" y="113.8" width="5.8" height="9.799999999999997" fill="#ffe800" stroke="#9a9a20" stroke-width="0.5"/><path d="M857.5 111.5L855 117.8L858 117L859.5 119L861 113M864.5 111.5L867 117.8L864 117L862.5 119L861 113" fill="#94caee" stroke="#1e78d0" stroke-width="1.1"/><circle cx="861" cy="105.8" r="6.3" fill="#94caee" stroke="#1e78d0" stroke-width="1.3"/></svg>
<svg class="r" style="left:938px;top:86px" width="44" height="46" viewBox="938 86 44 46"><circle cx="960.1" cy="108.8" r="18.3" fill="#fff" stroke="#333" stroke-width="1.6"/><circle cx="959.8" cy="104.7" r="6.3" fill="none" stroke="#1e78d0" stroke-width="1.6"/><path d="M949.6 123.5Q951.5 112 959.8 112Q968.2 112 970.5 123.5" fill="none" stroke="#1e78d0" stroke-width="1.6"/></svg>
<svg class="r" style="left:1050px;top:84px" width="50" height="50" viewBox="1050 84 50 50"><circle cx="1075" cy="108.8" r="19.5" fill="#fcf6c2" stroke="#a0521e" stroke-width="1.3"/><path d="M1067.8 109.3H1083.8Q1084 100 1076 99.7Q1067.5 99.7 1067.5 109.6Q1067.5 119.2 1076 119.2Q1080.8 119.2 1083.5 116.2" fill="none" stroke="#9a4a1a" stroke-width="3.6"/></svg>
<svg class="r" style="left:1160px;top:88px" width="45" height="42" viewBox="1160 88 45 42"><rect x="1165" y="93.8" width="5.8" height="10.0" fill="#000"/><rect x="1165" y="103.8" width="5.8" height="10.0" fill="#e00000"/><rect x="1165" y="113.8" width="5.8" height="10.0" fill="#ffe800" stroke="#9a9a20" stroke-width="0.5"/><path d="M1197.3 104.2H1177.5M1182.6 98.8L1177.2 104.2L1182.6 109.6" fill="none" stroke="#1e7ed8" stroke-width="1.5"/><path d="M1177.2 113H1197.5M1191.9 107.6L1197.4 113L1191.9 118.5" fill="none" stroke="#e84848" stroke-width="1.5"/></svg>
<svg class="r" style="left:1275px;top:88px" width="40" height="42" viewBox="1275 88 40 42"><path d="M1282 108.3Q1279 109 1279 110.8V121.8Q1279 125 1282 125H1308Q1311 125 1311 121.8V108.3Q1309 109.6 1303 109.6H1287Q1284 109.6 1282 108.3Z" fill="#a9d6af"/><path d="M1282 92.8H1308Q1311 92.8 1311 95.8V105Q1311 107.6 1306 107.6H1287Q1279 107.6 1279 109.8V95.8Q1279 92.8 1282 92.8Z" fill="#94caee"/></svg>
<svg class="r" style="left:1370px;top:84px" width="50" height="50" viewBox="1370 84 50 50"><circle cx="1392" cy="106.6" r="17.5" fill="#fff" stroke="#e02828" stroke-width="1.3"/><ellipse cx="1392" cy="106.6" rx="9.4" ry="17.5" fill="none" stroke="#e02828" stroke-width="1.2"/><path d="M1392 89.1V124.1M1376 101.8H1408M1376 111.8H1408" stroke="#e02828" stroke-width="1.2"/><rect x="1389" y="117" width="26" height="13" fill="#f0f0f0"/><path d="M1400 119.2H1394.5Q1391 119.2 1391 123.5Q1391 127.8 1394.5 127.8H1398.5Q1402 127.8 1402 123.5M1404.5 127.8H1410Q1413.5 127.8 1413.5 123.5Q1413.5 119.2 1410 119.2H1406Q1402.5 119.2 1402.5 123.5" fill="none" stroke="#333" stroke-width="1.4"/></svg>
<div class="r" style="left:195px;top:205px;width:231px;height:33px;background:#f7f7f7;"></div>
<div class="r" style="left:194px;top:206px;width:1px;height:31px;background:#c3c3c3;"></div>
<div class="r" style="left:426px;top:206px;width:1px;height:31px;background:#c3c3c3;"></div>
<div class="r" style="left:195px;top:237px;width:231px;height:1px;background:#f0f0f0;"></div>
<svg class="r" style="left:56px;top:213px" width="17" height="19" viewBox="0 0 17 19"><path d="M8.5 1L15.8 3.6V9.2C15.8 13.3 12.8 16.5 8.5 18.2C4.2 16.5 1.2 13.3 1.2 9.2V3.6Z" fill="#fff" stroke="#1e78d0" stroke-width="1.3"/><path d="M8.5 2.2V9.6H14.9V4.2Z" fill="#94caee"/><path d="M8.5 9.6V17.2C5 15.7 2.3 13 2.1 9.6Z" fill="#94caee"/></svg>
<div class="t" style="left:83px;top:212.94px;font-size:14.6px;color:#3b3b3b;font-weight:normal;">Teilnahme</div>
<svg class="r" style="left:172px;top:215px" width="13" height="13" viewBox="0 0 13 13"><path d="M1.5 1.5L11.5 11.5M11.5 1.5L1.5 11.5" stroke="#777" stroke-width="1.3"/></svg>
<svg class="r" style="left:211px;top:213px" width="17" height="19" viewBox="0 0 17 19"><path d="M8.5 1L15.8 3.6V9.2C15.8 13.3 12.8 16.5 8.5 18.2C4.2 16.5 1.2 13.3 1.2 9.2V3.6Z" fill="#fff" stroke="#1e78d0" stroke-width="1.3"/><path d="M8.5 2.2V9.6H14.9V4.2Z" fill="#94caee"/><path d="M8.5 9.6V17.2C5 15.7 2.3 13 2.1 9.6Z" fill="#94caee"/></svg>
<div class="t" style="left:237px;top:212.94px;font-size:14.6px;color:#3b3b3b;font-weight:normal;">Leistungserfassung Tn</div>
<svg class="r" style="left:405px;top:215px" width="13" height="13" viewBox="0 0 13 13"><path d="M1.5 1.5L11.5 11.5M11.5 1.5L1.5 11.5" stroke="#333" stroke-width="1.8"/></svg>
<svg class="r" style="left:443px;top:213px" width="17" height="19" viewBox="0 0 17 19"><path d="M8.5 1L15.8 3.6V9.2C15.8 13.3 12.8 16.5 8.5 18.2C4.2 16.5 1.2 13.3 1.2 9.2V3.6Z" fill="#fff" stroke="#1e78d0" stroke-width="1.3"/><path d="M8.5 2.2V9.6H14.9V4.2Z" fill="#94caee"/><path d="M8.5 9.6V17.2C5 15.7 2.3 13 2.1 9.6Z" fill="#94caee"/></svg>
<div class="t" style="left:470px;top:212.94px;font-size:14.6px;color:#3b3b3b;font-weight:normal;">AV-Gutscheine</div>
<svg class="r" style="left:590px;top:215px" width="13" height="13" viewBox="0 0 13 13"><path d="M1.5 1.5L11.5 11.5M11.5 1.5L1.5 11.5" stroke="#777" stroke-width="1.3"/></svg>
<div class="t" style="right:139px;top:212.94px;font-size:14.6px;color:#3b3b3b;font-weight:normal;">Yağmur Abubakir</div>
<div class="r" style="left:1790px;top:211px;width:1px;height:24px;background:#d0d0d0;"></div>
<svg class="r" style="left:1796px;top:208px" width="26" height="28" viewBox="1796 208 26 28"><path d="M1801.3 219.2A8.6 8.6 0 1 1 1801 225.2" fill="none" stroke="#1e78d0" stroke-width="1.6"/><path d="M1800.6 213V219.6H1806.8" fill="none" stroke="#1e78d0" stroke-width="1.6"/></svg>
<svg class="r" style="left:1825px;top:211px" width="21" height="21" viewBox="0 0 21 21"><path d="M10.5 1V20M1 10.5H20" stroke="#8cc63f" stroke-width="1.6"/></svg>
<svg class="r" style="left:1856px;top:215px" width="18" height="11" viewBox="0 0 18 11"><path d="M0.5 10.5L9 1L17.5 10.5Z" fill="#333"/></svg>
<svg class="r" style="left:55px;top:253px" width="21" height="21" viewBox="0 0 21 21"><circle cx="10.5" cy="10.5" r="9.3" fill="#bcd6ee" stroke="#1e78d0" stroke-width="1.4"/><path d="M6.9 8.3Q7 4.6 10.5 4.6Q14.1 4.6 14.1 7.5Q14.1 9.5 11.8 10.4Q10.6 10.9 10.6 12.6V13" fill="none" stroke="#1e78d0" stroke-width="2.3"/><rect x="9.2" y="14.3" width="2.8" height="2.4" fill="#1e78d0"/></svg>
<div class="t" style="left:82px;top:254.94px;font-size:14.6px;color:#3b3b3b;font-weight:normal;">Gutschein:</div>
<div class="r" style="left:167px;top:250px;width:314px;height:28px;background:#ffffff;box-sizing:border-box;border:1px solid #c2c2c2;"></div>
<div class="t" style="left:173px;top:254.94px;font-size:14.6px;color:#3b3b3b;font-weight:normal;">AV-Gutschein (999X704004-1; Bewilligt)</div>
<svg class="r" style="left:443px;top:258px" width="12" height="12" viewBox="0 0 12 12"><path d="M1 1L11 11M11 1L1 11" stroke="#333" stroke-width="1.6"/></svg>
<svg class="r" style="left:463px;top:261px" width="12" height="7" viewBox="0 0 12 7"><path d="M0.5 0.5H11.5L6 6.5Z" fill="#333"/></svg>
<div class="t" style="left:8px;top:213px;font-size:17.2px;color:#505050;writing-mode:vertical-rl;line-height:16px;">Personenfilter</div>
<div class="t" style="left:8px;top:336px;font-size:17.2px;color:#505050;writing-mode:vertical-rl;line-height:16px;">Dokumentation</div>
<div class="t" style="left:1890px;top:212px;font-size:17.2px;color:#ef7d22;writing-mode:vertical-rl;line-height:16px;">Aktionen</div>
<div class="t" style="left:1890px;top:298px;font-size:17.2px;color:#505050;writing-mode:vertical-rl;line-height:16px;">Kalender</div>
<div class="t" style="left:1890px;top:383px;font-size:17.2px;color:#505050;writing-mode:vertical-rl;line-height:16px;">Dokumente</div>
<div class="t" style="left:1890px;top:488px;font-size:17.2px;color:#505050;writing-mode:vertical-rl;line-height:16px;">Hilfe</div>
<div class="r" style="left:1546px;top:240px;width:338px;height:403px;box-shadow:2px 3px 7px rgba(0,0,0,0.28);"></div>
<div class="r" style="left:1544px;top:238px;width:338px;height:403px;background:#ffffff;box-sizing:border-box;border:1px solid #a9a9a9;border-top:none;"></div>
<div class="r" style="left:1545px;top:238px;width:337px;height:34px;background:#f0f0f0;"></div>
<div class="r" style="left:1545px;top:272px;width:337px;height:1px;background:#b0b0b0;"></div>
<div class="t" style="left:1554px;top:245.80px;font-size:15px;color:#1a73c8;font-weight:normal;">Kontextabhängige Aktionen</div>
<div class="r" style="left:1545px;top:504px;width:337px;height:1px;background:#b0b0b0;"></div>
<div class="r" style="left:1545px;top:505px;width:337px;height:33px;background:#f0f0f0;"></div>
<div class="r" style="left:1545px;top:538px;width:337px;height:1px;background:#b0b0b0;"></div>
<div class="t" style="left:1554px;top:511.80px;font-size:15px;color:#1a73c8;font-weight:normal;">Übernahme-Aktionen</div>
<div class="r" style="left:1545px;top:572px;width:337px;height:1px;background:#b0b0b0;"></div>
<div class="r" style="left:1545px;top:573px;width:337px;height:33px;background:#f0f0f0;"></div>
<div class="r" style="left:1545px;top:606px;width:337px;height:1px;background:#b0b0b0;"></div>
<div class="t" style="left:1554px;top:579.80px;font-size:15px;color:#1a73c8;font-weight:normal;">Schnittstellen</div>
<div class="r" style="left:1545px;top:607px;width:332px;height:31px;background:#fff580;"></div>
<div class="t" style="left:1592px;top:279.94px;font-size:14.6px;color:#3b3b3b;font-weight:normal;">Schließen</div>
<div class="t" style="left:1592px;top:313.94px;font-size:14.6px;color:#3b3b3b;font-weight:normal;">Leistung erfassen...</div>
<div class="t" style="left:1592px;top:345.94px;font-size:14.6px;color:#3b3b3b;font-weight:normal;">Leistungsgruppe hinzufügen...</div>
<div class="t" style="left:1592px;top:377.94px;font-size:14.6px;color:#3b3b3b;font-weight:normal;">Eintrag duplizieren...</div>
<div class="t" style="left:1592px;top:409.94px;font-size:14.6px;color:#3b3b3b;font-weight:normal;">Eintrag bearbeiten...</div>
<div class="t" style="left:1592px;top:443.94px;font-size:14.6px;color:#3b3b3b;font-weight:normal;">Auswahl löschen...</div>
<div class="t" style="left:1592px;top:477.94px;font-size:14.6px;color:#3b3b3b;font-weight:normal;">Ansicht auf diese Gruppe beschränken</div>
<div class="t" style="left:1592px;top:545.94px;font-size:14.6px;color:#3b3b3b;font-weight:normal;">Auswahl in andere Tn übernehmen...</div>
<div class="t" style="left:1592px;top:613.94px;font-size:14.6px;color:#3b3b3b;font-weight:normal;">Übergabe an Rechnungsschreibung...</div>
<div class="r" style="left:1585px;top:306px;width:292px;height:1px;background:#d4d4d4;"></div>
<div class="r" style="left:1585px;top:436px;width:292px;height:1px;background:#d4d4d4;"></div>
<div class="r" style="left:1585px;top:470px;width:292px;height:1px;background:#d4d4d4;"></div>
<svg class="r" style="left:1550px;top:278px" width="30" height="362" viewBox="1550 278 30 362"><path d="M1555.3 289.8L1560.8 295.5L1572.5 284.3" fill="none" stroke="#20a04a" stroke-width="1.6"/><path d="M1563.5 313V332M1554 322.5H1573M1563.5 345.5V364.5M1554 355H1573" stroke="#8cc63f" stroke-width="1.3"/><path d="M1557.2 394.5H1554.5V377.5H1561.5L1562.5 379.2" fill="none" stroke="#333" stroke-width="1.2"/><path d="M1560.2 381H1567L1573.2 387.2V397.3H1560.2Z" fill="#fff" stroke="#333" stroke-width="1.2"/><path d="M1555 428.5L1556.5 422.5L1570 409L1573.2 412.2L1559.7 425.7Z M1568 411L1571.2 414.2" fill="none" stroke="#333" stroke-width="1.2"/><path d="M1556.6 446.2H1570.6M1560.6 446.2V443.6H1566.6V446.2M1557.6 446.6V460.2Q1557.6 461.7 1559 461.7H1568.2Q1569.6 461.7 1569.6 460.2V446.6M1561 449.5V459M1563.6 449.5V459M1566.2 449.5V459" fill="none" stroke="#e83030" stroke-width="1.3"/><path d="M1554.6 479.2H1572.2L1565.8 487.6V496.8L1561.4 495V487.6Z" fill="#3ea0e8" stroke="#1e78d0" stroke-width="1"/><path d="M1556.5 563.4H1554.2V546.6H1560.5L1561.5 548" fill="none" stroke="#333" stroke-width="1.1"/><path d="M1559.4 566.2V549.6H1565.5L1569.5 553.6V557" fill="#fff" stroke="#333" stroke-width="1.1"/><circle cx="1568.6" cy="560.2" r="4.8" fill="#2bb255" stroke="#1c8c3c" stroke-width="0.8"/><path d="M1568.6 557.4V563M1565.8 560.2H1571.4" stroke="#fff" stroke-width="1.3"/><rect x="1555.9" y="613.9" width="16.2" height="18.4" rx="0.8" fill="#fffa9a" stroke="#333" stroke-width="1.3"/><path d="M1558.2 616.7H1570M1563 628.5H1570" stroke="#e01a10" stroke-width="1.8"/><path d="M1558.2 619.8H1563.7M1558.2 622.3H1562.8M1558.2 624.8H1563.7" stroke="#4a4a30" stroke-width="1.3"/><path d="M1566.3 619.8H1570M1566.3 622.3H1570M1566.3 624.8H1570" stroke="#8a8a60" stroke-width="1.3"/></svg>
<div class="t" style="left:4px;top:1114.94px;font-size:14.6px;color:#3b3b3b;font-weight:normal;">Qualli.life (Version 18.0.0.1201 - Vorschauversion)</div>
<div class="t" style="right:531px;top:1114.94px;font-size:14.6px;color:#3b3b3b;font-weight:normal;">Knoch@DEMO1.qualli.life</div>
<div class="t" style="right:92px;top:1114.94px;font-size:14.6px;color:#3b3b3b;font-weight:normal;">100%</div>
<div class="t" style="right:43px;top:1114.94px;font-size:14.6px;color:#3b3b3b;font-weight:normal;">16:40</div>
<div class="r" style="left:1467px;top:1114px;width:1px;height:24px;background:#d0d0d0;"></div>
<div class="r" style="left:1554px;top:1114px;width:1px;height:24px;background:#d0d0d0;"></div>
<div class="r" style="left:1835px;top:1114px;width:1px;height:24px;background:#d0d0d0;"></div>
<div class="r" style="left:1558px;top:1111px;width:26px;height:29px;background:#c4c4c4;"></div>
<svg class="r" style="left:1400px;top:1110px" width="520" height="30" viewBox="1400 1110 520 30"><circle cx="1415.8" cy="1121.5" r="4.6" fill="none" stroke="#444" stroke-width="1.3"/><path d="M1407.2 1135.6Q1407.8 1127 1415.8 1127Q1423.8 1127 1424.4 1135.6" fill="none" stroke="#444" stroke-width="1.3"/><path d="M1451 1115.5L1459.5 1118.5V1124.5Q1459.5 1131.5 1451 1135Q1442.5 1131.5 1442.5 1124.5V1118.5Z" fill="none" stroke="#444" stroke-width="1.3"/><path d="M1446.8 1124.8L1450 1128L1455.5 1121.5" fill="none" stroke="#444" stroke-width="1.3"/><circle cx="1484" cy="1125.2" r="9.6" fill="#f6cd72" stroke="#c8a04a" stroke-width="0.6"/><path d="M1479.6 1125.6H1488.4Q1488.4 1120.5 1484.1 1120.4Q1479.5 1120.4 1479.5 1125.8Q1479.5 1130.6 1484.1 1130.6Q1486.6 1130.6 1488 1129.1" fill="none" stroke="#444" stroke-width="1.7"/><rect x="1501.5" y="1118.5" width="19" height="13.5" fill="none" stroke="#444" stroke-width="1.3"/><path d="M1501.8 1118.8L1511 1126.5L1520.2 1118.8" fill="none" stroke="#444" stroke-width="1.3"/><path d="M1529.5 1121.8Q1538.3 1113.5 1547.1 1121.8M1532.3 1124.8Q1538.3 1119 1544.3 1124.8M1535.1 1127.6Q1538.3 1124.6 1541.5 1127.6" fill="none" stroke="#b0b0b0" stroke-width="1.3"/><circle cx="1538.3" cy="1131" r="1.6" fill="#b0b0b0"/><rect x="1562.5" y="1117.5" width="18" height="15" fill="none" stroke="#444" stroke-width="1.4"/><path d="M1562.5 1120.8H1580.5M1566 1121V1132.5M1568 1124H1578M1568 1126.6H1578M1568 1129.2H1578" stroke="#444" stroke-width="1.2"/><path d="M1593 1125H1603" stroke="#444" stroke-width="2"/><path d="M1735 1125H1745M1740 1120V1130" stroke="#444" stroke-width="2"/><rect x="1609" y="1124" width="120" height="3" fill="#a8a8a8"/><rect x="1662.5" y="1117" width="7.5" height="16" fill="#444" stroke="#fff" stroke-width="0.8"/><path d="M1913 1128h1.5v1.5h-1.5zM1910 1131h1.5v1.5h-1.5zM1913 1131h1.5v1.5h-1.5zM1907 1134h1.5v1.5h-1.5zM1910 1134h1.5v1.5h-1.5zM1913 1134h1.5v1.5h-1.5z" fill="#777"/></svg>
<svg class="r" style="left:1857px;top:219px" width="22" height="31" viewBox="0 0 22 31"><g transform="translate(3.5,3)"><path d="M0 0V22.3L4.5 17.1L8.7 25.2L13.1 23.3L9.1 15.5H16Z" fill="#fff" stroke="#fff" stroke-width="3" stroke-linejoin="round" opacity="0.8"/><path d="M0 0V22.3L4.5 17.1L8.7 25.2L13.1 23.3L9.1 15.5H16Z" fill="#fff" stroke="#000" stroke-width="1.5" stroke-linejoin="miter"/></g></svg></body></html>
